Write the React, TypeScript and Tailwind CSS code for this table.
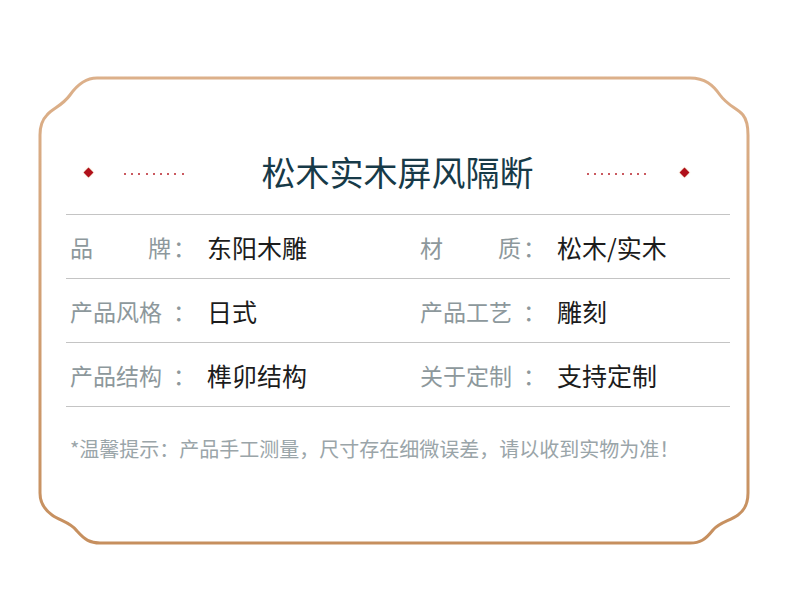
import React from "react";

const rows = [
  [
    { label: ["品", "牌"], value: "东阳木雕" },
    { label: ["材", "质"], value: "松木/实木" },
  ],
  [
    { label: ["产品风格"], value: "日式" },
    { label: ["产品工艺"], value: "雕刻" },
  ],
  [
    { label: ["产品结构"], value: "榫卯结构" },
    { label: ["关于定制"], value: "支持定制" },
  ],
];

function Frame() {
  return (
    <svg className="absolute inset-0 pointer-events-none" width="790" height="613" viewBox="0 0 790 613">
      <defs>
        <linearGradient id="frameStroke" x1="0" y1="0" x2="0" y2="1">
          <stop offset="0" stopColor="#dcb08a" />
          <stop offset="1" stopColor="#c68f5e" />
        </linearGradient>
      </defs>
      <path
        d="M97,78 L690,78 C705,78 713,85 720,95 C728,106 737,108 743,115 C747,120 748,127 748,135 L748,493 C748,502 745,510 738,515 C730,521 720,522 713,530 C705,540 700,543 690,543 L100,543 C90,543 85,540 77,531 C70,522 60,521 52,515 C45,510 40,502 40,493 L40,135 C40,126 42,120 47,115 C53,108 62,106 70,95 C77,85 85,78 97,78 Z"
        fill="none"
        stroke="url(#frameStroke)"
        strokeWidth="3"
      />
    </svg>
  );
}

function Dots() {
  return (
    <div className="flex gap-[5.2px] pt-[4px]">
      {Array.from({ length: 9 }).map((_, i) => (
        <span key={i} className="w-[2px] h-[2px] rounded-full bg-[#b8222b]" />
      ))}
    </div>
  );
}

function Diamond() {
  return <span className="block w-[7px] h-[7px] rotate-45 bg-[#b0101a] shadow-[0_0_2px_#e8c9a0]" />;
}

export default function App() {
  return (
    <div
      className="relative w-[790px] h-[613px] bg-white overflow-hidden"
      style={{ fontFamily: '"Noto Sans CJK SC", "Noto Sans", sans-serif' }}
    >
      <Frame />

      {/* Title */}
      <div className="relative grid grid-cols-[1fr_auto_1fr] items-center h-[44px] mt-[150px] pl-[85px] pr-[102px]">
        <div className="flex items-center">
          <Diamond />
          <div className="ml-[32px]">
            <Dots />
          </div>
        </div>
        <h1 className="text-center text-[34px] leading-[44px] text-[#173a48] font-normal ml-[22px]">
          松木实木屏风隔断
        </h1>
        <div className="flex items-center justify-end">
          <div className="mr-[35px]">
            <Dots />
          </div>
          <Diamond />
        </div>
      </div>

      {/* Spec table */}
      <div className="relative mt-[20px] ml-[66px] mr-[60px] border-t border-[#c4c4c4]">
        {rows.map((row, i) => (
          <div key={i} className="grid grid-cols-[350px_1fr] h-16 border-b border-[#c4c4c4] items-center">
            {row.map((cell, j) => (
              <div key={j} className="flex items-center pl-[4px]">
                <div className="w-[137px] flex text-[23px] leading-8 text-[#8d989c]">
                  <div className="w-[101px] flex justify-between">
                    {cell.label.map((t, k) => (
                      <span key={k}>{t}</span>
                    ))}
                  </div>
                  <span className="ml-[2px]">：</span>
                </div>
                <span className="text-[25px] leading-8 text-[#1c1c1c]">{cell.value}</span>
              </div>
            ))}
          </div>
        ))}
      </div>

      {/* Note */}
      <p className="relative mt-[28px] ml-[70px] text-[20px] leading-7 text-[#9aa5a9]">
        *温馨提示：产品手工测量，尺寸存在细微误差，请以收到实物为准！
      </p>
    </div>
  );
}
